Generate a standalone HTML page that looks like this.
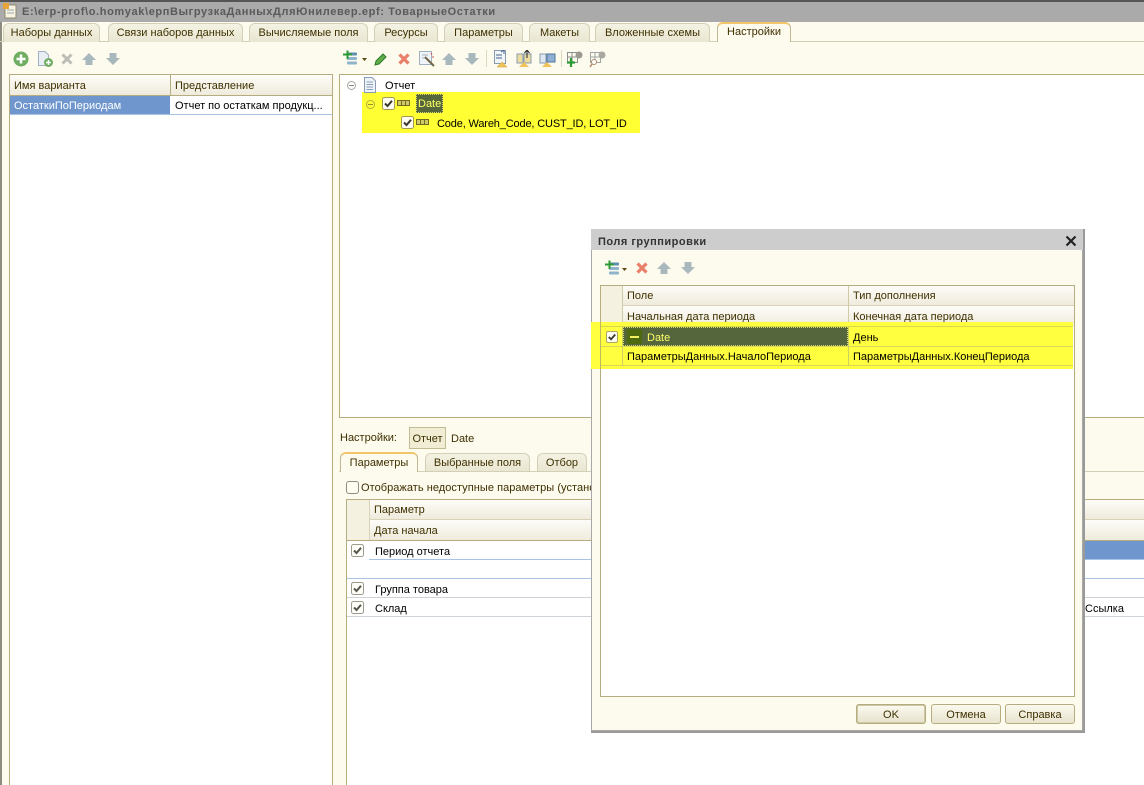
<!DOCTYPE html>
<html><head><meta charset="utf-8">
<style>
html,body{margin:0;padding:0}
#p{position:relative;width:1144px;height:785px;overflow:hidden;background:#fff;font-family:"Liberation Sans",sans-serif;font-size:11px;color:#3e3000}
#p div,#p svg{position:absolute}
.t{white-space:nowrap;line-height:14px;height:14px;padding-top:1px}
.k{color:#000}
.tab{box-sizing:border-box;background:linear-gradient(#f4f2e2,#e9e6d2);border:1px solid #d4d0b8;border-bottom:none;border-radius:6px 6px 0 0;text-align:center;line-height:18px;white-space:nowrap}
.tab.a{background:#fdfaee;border-color:#bdb794;border-top:2px solid #f3c56a;line-height:17px;z-index:2}
.h{background:linear-gradient(#fdfcf8,#efebdc)}
.ln{background:#b5ad80}
</style></head><body>
<div id="p">
<svg width="0" height="0" style="left:0;top:0">
<defs>
<symbol id="up" viewBox="0 0 14 14"><path d="M7 1 14 8H10.500V13H3.500V8H0Z" fill="#a9b8bd"/></symbol>
<symbol id="dn" viewBox="0 0 14 14"><path d="M7 13 14 6H10.500V1H3.500V6H0Z" fill="#a9b8bd"/></symbol>
<symbol id="x" viewBox="0 0 14 14"><path d="M2.500 2.500 11.500 11.500M11.500 2.500 2.500 11.500" stroke="#e8806a" stroke-width="3.200"/></symbol>
<symbol id="xg" viewBox="0 0 14 14"><path d="M2.500 2.500 11.500 11.500M11.500 2.500 2.500 11.500" stroke="#bcbdb6" stroke-width="3"/></symbol>
<symbol id="cb" viewBox="0 0 13 13"><rect x=".5" y=".5" width="12" height="12" rx="2" fill="#fffdf2" stroke="#a29a55"/><path d="M3 6.500 5.500 9 10 3.800" fill="none" stroke="#3a3a30" stroke-width="2"/></symbol>
<symbol id="cg" viewBox="0 0 13 13"><rect x=".5" y=".5" width="12" height="12" rx="2" fill="#fffef8" stroke="#9a9a8e"/><path d="M3 6.500 5.500 9 10 3.800" fill="none" stroke="#55554c" stroke-width="2"/></symbol>
<symbol id="add" viewBox="0 0 18 16"><rect x="5" y="2.500" width="10" height="3" rx="1" fill="#5f8faf"/><rect x="5" y="7" width="10" height="3" rx="1" fill="#8fb4cc"/><rect x="5" y="11.500" width="10" height="3" rx="1" fill="#8fb4cc"/><path d="M5.500 .5V9M1 4.500H10" stroke="#2c9a35" stroke-width="2"/></symbol>
<symbol id="grp" viewBox="0 0 13 6"><rect x=".5" y=".5" width="12" height="5" fill="#cfc868" stroke="#706b20"/><path d="M4.500 1V5M8.500 1V5" stroke="#706b20"/></symbol>
<symbol id="doc" viewBox="0 0 14 16"><path d="M1.500 .5H9L12.500 4V15.500H1.500Z" fill="#eef3f8" stroke="#8a9cb4"/><path d="M3.500 5H10M3.500 7.500H10M3.500 10H10M3.500 12.500H10" stroke="#8aa0bc"/></symbol>
</defs></svg>

<!-- title bar -->
<div style="left:0;top:0;width:1144px;height:22px;background:#aaa;border-top:2px solid #555;box-sizing:border-box"></div>
<svg style="left:2px;top:2px" width="16" height="17" viewBox="0 0 16 17"><rect x="3" y="3" width="11" height="13" fill="#f7f3e0" stroke="#8c8c70"/><rect x="1" y="1" width="6" height="6" fill="#e8a43a"/><path d="M5 8H12M5 11H12" stroke="#9aa"/></svg>
<div class="t" style="left:22px;top:4px;font-weight:bold;color:#5a5a5a;letter-spacing:.62px">E:\erp-prof\o.homyak\ерпВыгрузкаДанныхДляЮнилевер.epf: ТоварныеОстатки</div>

<!-- main background -->
<div style="left:0;top:22px;width:1144px;height:763px;background:#fdfaee"></div>
<div style="left:0;top:22px;width:2px;height:763px;background:#8c8c80"></div>
<div style="left:0;top:41px;width:1144px;height:1px;background:#d4d0b8"></div>

<!-- top tabs -->
<div class="tab" style="left:3px;top:23px;width:97px;height:19px">Наборы данных</div>
<div class="tab" style="left:108px;top:23px;width:135px;height:19px">Связи наборов данных</div>
<div class="tab" style="left:249px;top:23px;width:119px;height:19px">Вычисляемые поля</div>
<div class="tab" style="left:374px;top:23px;width:64px;height:19px">Ресурсы</div>
<div class="tab" style="left:444px;top:23px;width:79px;height:19px">Параметры</div>
<div class="tab" style="left:529px;top:23px;width:61px;height:19px">Макеты</div>
<div class="tab" style="left:595px;top:23px;width:115px;height:19px">Вложенные схемы</div>
<div class="tab a" style="left:717px;top:22px;width:74px;height:20px">Настройки</div>

<!-- left toolbar -->
<svg style="left:13px;top:51px" width="16" height="16" viewBox="0 0 16 16"><circle cx="8" cy="8" r="7.500" fill="#6fae62"/><path d="M8 3.500V12.500M3.500 8H12.500" stroke="#fff" stroke-width="2.500"/></svg>
<svg style="left:37px;top:51px" width="16" height="16" viewBox="0 0 16 16"><path d="M1.500 .5H8L11.500 4V14.500H1.500Z" fill="#e8eef4" stroke="#9fb0c0"/><circle cx="11.500" cy="11.500" r="4.500" fill="#6fae62"/><path d="M11.500 9V14M9 11.500H14" stroke="#fff" stroke-width="1.500"/></svg>
<svg style="left:60px;top:52px" width="14" height="14"><use href="#xg"/></svg>
<svg style="left:82px;top:52px" width="14" height="14"><use href="#up"/></svg>
<svg style="left:106px;top:52px" width="14" height="14"><use href="#dn"/></svg>

<!-- left panel -->
<div style="left:9px;top:74px;width:324px;height:711px;background:#fff;border-left:1px solid #b5ad80;border-right:1px solid #b5ad80;border-top:1px solid #b5ad80;box-sizing:border-box"></div>
<div class="h" style="left:10px;top:75px;width:322px;height:20px"></div>
<div class="ln" style="left:10px;top:95px;width:322px;height:1px"></div>
<div class="ln" style="left:170px;top:75px;width:1px;height:20px"></div>
<div class="t" style="left:14px;top:78px">Имя варианта</div>
<div class="t" style="left:175px;top:78px">Представление</div>
<div style="left:10px;top:96px;width:160px;height:18px;background:#6f97cd"></div>
<div style="left:10px;top:114px;width:322px;height:1px;background:#a9c3e6"></div>
<div class="t" style="left:14px;top:98px;color:#fff">ОстаткиПоПериодам</div>
<div class="t k" style="left:175px;top:98px">Отчет по остаткам продукц...</div>

<!-- right toolbar -->
<svg style="left:342px;top:50px" width="18" height="16"><use href="#add"/></svg>
<svg style="left:362px;top:58px" width="5" height="3"><path d="M0 0H5L2.500 3Z" fill="#5a4a10"/></svg>
<svg style="left:374px;top:52px" width="14" height="14" viewBox="0 0 14 14"><path d="M2 9 9 2 12 5 5 12 1 13Z" fill="#5fb04a" stroke="#2f7a2a"/></svg>
<svg style="left:397px;top:52px" width="14" height="14"><use href="#x"/></svg>
<svg style="left:419px;top:51px" width="16" height="16" viewBox="0 0 16 16"><rect x=".5" y=".5" width="12" height="13" fill="#f0f4f8" stroke="#9fb0c0"/><path d="M3 4H9M3 7H8" stroke="#9fb0c0"/><path d="M6 6 15 15" stroke="#70674a" stroke-width="2"/><path d="M12 2 13 4M15 6 13 6" stroke="#d85a5a"/></svg>
<svg style="left:442px;top:52px" width="14" height="14"><use href="#up"/></svg>
<svg style="left:465px;top:52px" width="14" height="14"><use href="#dn"/></svg>
<div style="left:486px;top:50px;width:1px;height:17px;background:#ddd8bd"></div>
<svg style="left:493px;top:50px" width="18" height="18" viewBox="0 0 18 18"><rect x="1.500" y=".5" width="11" height="13" fill="#f2f5f8" stroke="#8a9cb0"/><path d="M3 5H9M3 8H9M8 2 11 0V4" stroke="#40608a" fill="none"/><path d="M9 12 14 17H4Z" fill="#f0c45a" stroke="#c79a30" stroke-width=".5"/></svg>
<svg style="left:516px;top:50px" width="18" height="18" viewBox="0 0 18 18"><path d="M1 4H7V13H1ZM8 4H15V13H8Z" fill="#ecdca0" stroke="#8a9cb0"/><path d="M11 8V1M8.500 3 11 0 13.500 3" stroke="#222" fill="none"/><path d="M8 12 13 17H3Z" fill="#f0c45a"/></svg>
<svg style="left:539px;top:50px" width="18" height="18" viewBox="0 0 18 18"><path d="M1 4H7V13H1Z" fill="#dfe8f2" stroke="#8a9cb0"/><path d="M8 4H16V12H8Z" fill="#8fb0d4" stroke="#50749a"/><path d="M8 12 13 17H3Z" fill="#f0c45a"/></svg>
<div style="left:561px;top:50px;width:1px;height:17px;background:#ddd8bd"></div>
<svg style="left:566px;top:50px" width="18" height="18" viewBox="0 0 18 18"><rect x="1.500" y="2.500" width="10" height="10" fill="none" stroke="#8a9090"/><path d="M6 2V13M1 7H12" stroke="#8a9090"/><circle cx="13" cy="5" r="3.500" fill="#9a9a90"/><path d="M5 8V17M1 12.500H9" stroke="#2c9a35" stroke-width="2.200"/></svg>
<svg style="left:589px;top:50px" width="18" height="18" viewBox="0 0 18 18"><rect x="1.500" y="2.500" width="10" height="10" fill="none" stroke="#a0a6a6"/><path d="M6 2V13M1 7H12" stroke="#a0a6a6"/><circle cx="13" cy="5" r="3.500" fill="#a8a8a0"/><circle cx="5" cy="12" r="2.500" fill="#fff" stroke="#b08a70"/><path d="M3 14 1 17" stroke="#b08a70" stroke-width="1.500"/></svg>

<!-- tree panel -->
<div style="left:339px;top:74px;width:805px;height:344px;background:#fff;border-left:1px solid #b5ad80;border-top:1px solid #b5ad80;border-bottom:1px solid #b5ad80;box-sizing:border-box"></div>
<div style="left:362px;top:92px;width:278px;height:41px;background:#ffff33"></div>
<svg style="left:347px;top:81px" width="9" height="9" viewBox="0 0 9 9"><circle cx="4.500" cy="4.500" r="4" fill="#fff" stroke="#a8a8a0"/><path d="M2 4.500H7" stroke="#888"/></svg>
<svg style="left:363px;top:77px" width="14" height="16"><use href="#doc"/></svg>
<div class="t k" style="left:385px;top:78px">Отчет</div>
<svg style="left:366px;top:100px" width="9" height="9" viewBox="0 0 9 9"><circle cx="4.500" cy="4.500" r="4" fill="none" stroke="#b0b040"/><path d="M2 4.500H7" stroke="#909030"/></svg>
<svg style="left:382px;top:97px" width="13" height="13"><use href="#cb"/></svg>
<svg style="left:397px;top:100px" width="13" height="6"><use href="#grp"/></svg>
<div style="left:416px;top:94px;width:27px;height:19px;background:#55653c;border:1px dotted #d8d870;box-sizing:border-box"></div>
<div class="t" style="left:418px;top:96px;color:#ffff66">Date</div>
<svg style="left:401px;top:116px" width="13" height="13"><use href="#cb"/></svg>
<svg style="left:416px;top:119px" width="13" height="6"><use href="#grp"/></svg>
<div class="t k" style="left:437px;top:116px;letter-spacing:-.15px">Code, Wareh_Code, CUST_ID, LOT_ID</div>

<!-- settings -->
<div class="t" style="left:340px;top:430px">Настройки:</div>
<div style="left:409px;top:427px;width:37px;height:22px;background:#f1ecd4;border:1px solid #c2bc94;box-sizing:border-box;text-align:center;line-height:22px">Отчет</div>
<div class="t" style="left:451px;top:431px">Date</div>
<div style="left:339px;top:471px;width:805px;height:1px;background:#d4d0b8"></div>
<div class="tab a" style="left:340px;top:452px;width:78px;height:20px;line-height:19px">Параметры</div>
<div class="tab" style="left:425px;top:453px;width:105px;height:18px;line-height:19px">Выбранные поля</div>
<div class="tab" style="left:537px;top:453px;width:50px;height:18px;line-height:19px">Отбор</div>
<div style="left:346px;top:481px;width:13px;height:13px;background:#fffdf2;border:1px solid #8d8d80;border-radius:3px;box-sizing:border-box"></div>
<div class="t" style="left:361px;top:480px;width:230px;overflow:hidden;letter-spacing:.05px">Отображать недоступные параметры (установленные)</div>

<!-- params table -->
<div style="left:346px;top:499px;width:798px;height:286px;background:#fff;border-left:1px solid #b5ad80;border-top:1px solid #b5ad80;box-sizing:border-box"></div>
<div style="left:347px;top:500px;width:22px;height:40px;background:#f5f1e1"></div>
<div class="h" style="left:369px;top:500px;width:775px;height:19px"></div>
<div class="h" style="left:369px;top:520px;width:775px;height:20px"></div>
<div style="left:369px;top:519px;width:775px;height:1px;background:#d8d3b8"></div>
<div class="ln" style="left:347px;top:540px;width:797px;height:1px"></div>
<div style="left:369px;top:500px;width:1px;height:40px;background:#d8d3b8"></div>
<div class="t" style="left:374px;top:502px">Параметр</div>
<div class="t" style="left:374px;top:523px">Дата начала</div>
<div style="left:1085px;top:541px;width:59px;height:18px;background:#6f97cd"></div>
<div style="left:369px;top:559px;width:775px;height:1px;background:#a9c3e6"></div>
<div style="left:347px;top:578px;width:797px;height:1px;background:#a9c3e6"></div>
<div style="left:347px;top:597px;width:797px;height:1px;background:#cdd3d8"></div>
<div style="left:347px;top:616px;width:797px;height:1px;background:#cdd3d8"></div>
<svg style="left:351px;top:544px" width="13" height="13"><use href="#cg"/></svg>
<svg style="left:351px;top:582px" width="13" height="13"><use href="#cg"/></svg>
<svg style="left:351px;top:601px" width="13" height="13"><use href="#cg"/></svg>
<div class="t k" style="left:375px;top:544px">Период отчета</div>
<div class="t k" style="left:375px;top:582px">Группа товара</div>
<div class="t k" style="left:375px;top:601px">Склад</div>
<div class="t k" style="left:1085px;top:601px">Ссылка</div>

<!-- dialog -->
<div style="left:591px;top:229px;width:494px;height:504px;background:#fdfaee;box-shadow:inset 0 0 0 1px #a8a8a8;border-right:2px solid #9a9a9a;border-bottom:2px solid #9a9a9a;box-sizing:border-box"></div>
<div style="left:591px;top:229px;width:492px;height:21px;background:#cdcdcd"></div>
<div class="t" style="left:598px;top:234px;font-weight:bold;color:#333;letter-spacing:.5px">Поля группировки</div>
<svg style="left:1065px;top:235px" width="12" height="12" viewBox="0 0 12 12"><path d="M1.500 1.500 10.500 10.500M10.500 1.500 1.500 10.500" stroke="#222" stroke-width="2.200"/></svg>
<svg style="left:604px;top:260px" width="18" height="16"><use href="#add"/></svg>
<svg style="left:622px;top:268px" width="5" height="3"><path d="M0 0H5L2.500 3Z" fill="#5a4a10"/></svg>
<svg style="left:635px;top:261px" width="14" height="14"><use href="#x"/></svg>
<svg style="left:657px;top:261px" width="14" height="14"><use href="#up"/></svg>
<svg style="left:681px;top:261px" width="14" height="14"><use href="#dn"/></svg>

<div style="left:600px;top:285px;width:475px;height:412px;background:#fff;border:1px solid #b5ad80;box-sizing:border-box"></div>
<div style="left:601px;top:286px;width:21px;height:40px;background:#f5f1e1"></div>
<div class="h" style="left:623px;top:286px;width:451px;height:19px"></div>
<div class="h" style="left:623px;top:306px;width:451px;height:20px"></div>
<div style="left:623px;top:305px;width:451px;height:1px;background:#d8d3b8"></div>
<div style="left:622px;top:286px;width:1px;height:40px;background:#cfc9a6"></div>
<div style="left:848px;top:286px;width:1px;height:40px;background:#cfc9a6"></div>
<div class="t" style="left:627px;top:288px">Поле</div>
<div class="t" style="left:853px;top:288px">Тип дополнения</div>
<div class="t" style="left:627px;top:309px">Начальная дата периода</div>
<div class="t" style="left:853px;top:309px">Конечная дата периода</div>

<div style="left:591px;top:322px;width:482px;height:47px;background:#ffff40"></div>
<div style="left:600px;top:326px;width:473px;height:1px;background:#d8d84a"></div>
<div style="left:600px;top:346px;width:473px;height:1px;background:#d8d85a"></div>
<div style="left:600px;top:365px;width:473px;height:1px;background:#d8d85a"></div>
<div style="left:600px;top:322px;width:1px;height:47px;background:#c0b860"></div>
<div style="left:622px;top:327px;width:1px;height:39px;background:#d0d060"></div>
<div style="left:848px;top:327px;width:1px;height:39px;background:#d0d060"></div>
<svg style="left:606px;top:331px" width="12" height="12" viewBox="0 0 13 13"><use href="#cb"/></svg>
<div style="left:623px;top:327px;width:225px;height:19px;background:#55653c;border:1px dotted #d8d870;box-sizing:border-box"></div>
<div style="left:627px;top:329px;width:15px;height:15px;background:#4d6a10"></div>
<div style="left:630px;top:336px;width:9px;height:2px;background:#f0f060"></div>
<div class="t" style="left:647px;top:330px;color:#ffff66">Date</div>
<div class="t k" style="left:853px;top:330px">День</div>
<div class="t k" style="left:627px;top:349px">ПараметрыДанных.НачалоПериода</div>
<div class="t k" style="left:853px;top:349px">ПараметрыДанных.КонецПериода</div>

<!-- buttons -->
<div style="left:856px;top:704px;width:70px;height:20px;box-sizing:border-box;background:linear-gradient(#fbf9ef,#e8e3cd);border:2px solid #cfc8a6;outline:1px solid #b5ad80;outline-offset:-1px;border-radius:3px;text-align:center;line-height:18px">OK</div>
<div style="left:931px;top:704px;width:70px;height:20px;box-sizing:border-box;background:linear-gradient(#fbf9ef,#e8e3cd);border:1px solid #b5ad80;border-radius:3px;text-align:center;line-height:20px">Отмена</div>
<div style="left:1005px;top:704px;width:70px;height:20px;box-sizing:border-box;background:linear-gradient(#fbf9ef,#e8e3cd);border:1px solid #b5ad80;border-radius:3px;text-align:center;line-height:20px">Справка</div>
</div>
</body></html>
